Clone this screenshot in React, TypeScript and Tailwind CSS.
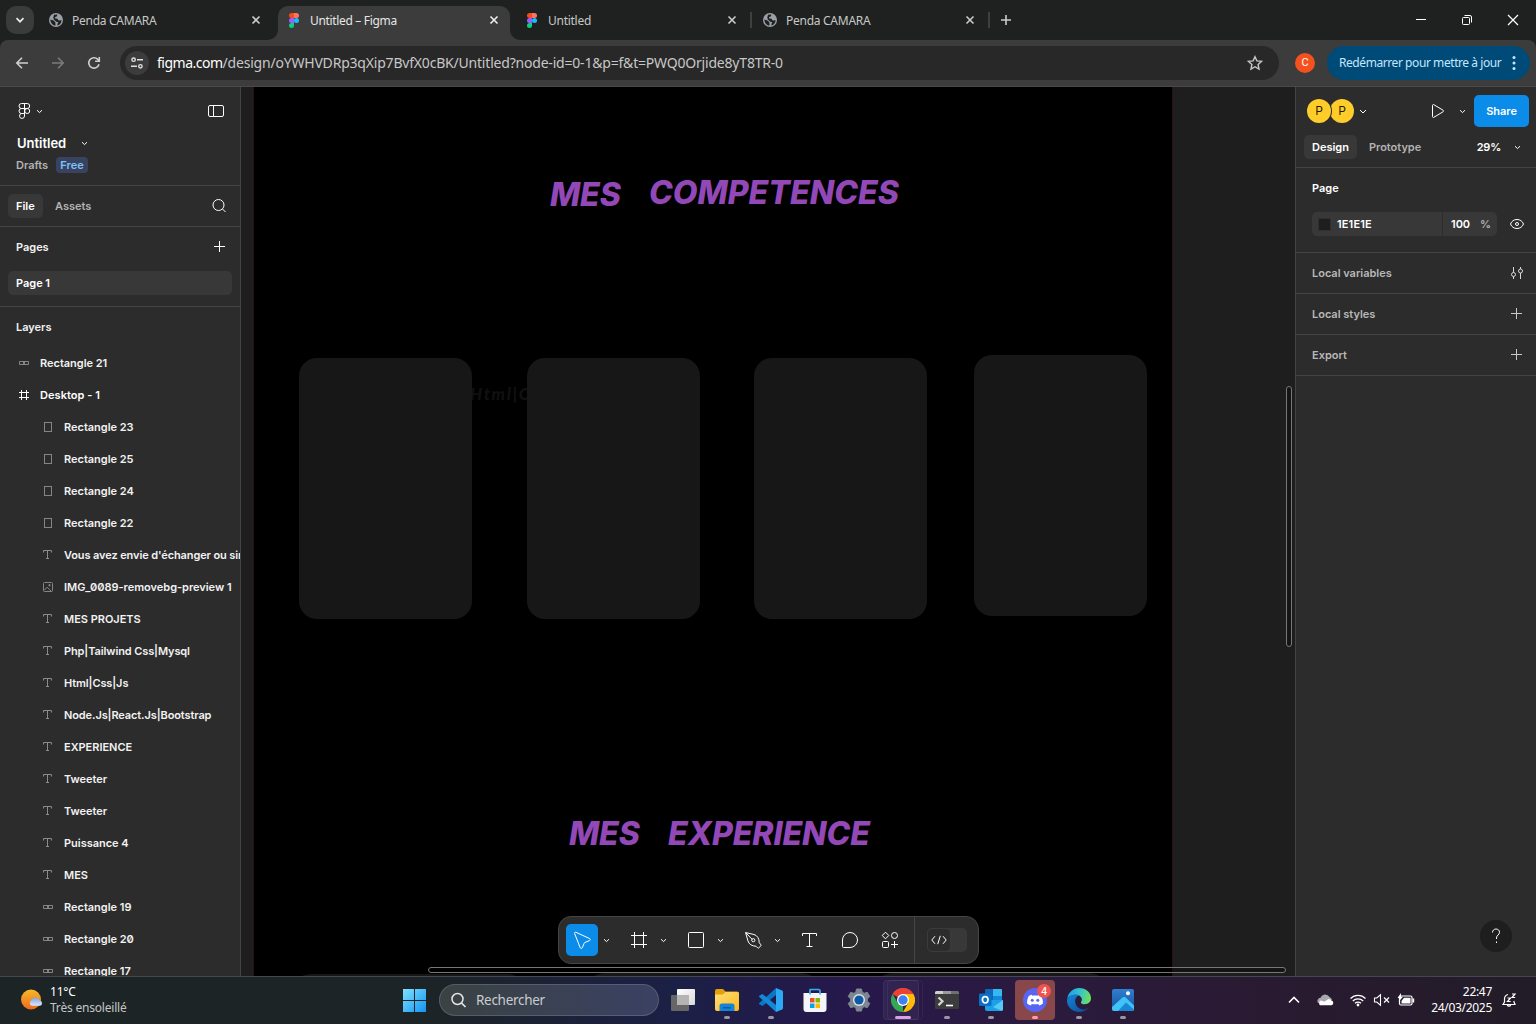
import React from "react";

type Kids = { children?: React.ReactNode; className?: string };

const Svg = ({ w, h = w, children, className = "" }: Kids & { w: number; h?: number }) => (
  <svg width={w} height={h} viewBox={`0 0 ${w} ${h}`} fill="none" className={`shrink-0 ${className}`}>
    {children}
  </svg>
);

const Chevron = ({ className = "" }: { className?: string }) => (
  <Svg w={16} className={`text-white ${className}`}>
    <path d="M6 7.200 8.500 9.600l2.500-2.400" stroke="currentColor" strokeWidth="1" />
  </Svg>
);

/* ---------- Browser chrome ---------- */

const Globe = () => (
  <Svg w={14}>
    <circle cx="7" cy="7" r="7" fill="#9aa0a6" />
    <path
      d="M1.400 6.500 4.500 7.500 6.300 9.300 6.600 12.600C3.600 12.300 1.400 9.800 1.400 6.500ZM5 1.700 8.300 1.500 8 3.200 6.200 4 6 5.500 8.500 5.800 9.500 7.500 12.600 7.200C12.500 10 10.600 12.200 8.300 12.500L8.600 10.400 9.400 9.300 7.300 8.700 4.800 6.600 4.300 4.600Z"
      fill="#1f2120"
    />
  </Svg>
);

const FigmaLogo = () => (
  <Svg w={10} h={15}>
    <path d="M2.500 0H5v5H2.500a2.500 2.500 0 0 1 0-5Z" fill="#f24e1e" />
    <path d="M5 0h2.500a2.500 2.500 0 0 1 0 5H5Z" fill="#ff7262" />
    <path d="M2.500 5H5v5H2.500a2.500 2.500 0 0 1 0-5Z" fill="#a259ff" />
    <circle cx="7.500" cy="7.500" r="2.500" fill="#1abcfe" />
    <path d="M2.500 10H5v2.500A2.500 2.500 0 1 1 2.500 10Z" fill="#0acf83" />
  </Svg>
);

const TabClose = ({ light = false }: { light?: boolean }) => (
  <Svg w={10} className={light ? "text-[#eeeeee]" : "text-[#c9cccb]"}>
    <path d="m1.500 1.500 7 7M8.500 1.500l-7 7" stroke="currentColor" strokeWidth="1.600" />
  </Svg>
);

const tabs = [
  { title: "Penda CAMARA", icon: "globe", active: false, sep: false },
  { title: "Untitled – Figma", icon: "figma", active: true, sep: false },
  { title: "Untitled", icon: "figma", active: false, sep: true },
  { title: "Penda CAMARA", icon: "globe", active: false, sep: true },
];

const TabStrip = () => (
  <div className="flex h-10 bg-[#1f2120]">
    <div className="flex w-10 shrink-0 items-center pl-1.5">
      <div className="flex size-7 items-center justify-center rounded-[10px] bg-[#3a3b3b]">
        <Svg w={10}>
          <path d="m1.500 3.200 3.500 3.500 3.500-3.500" stroke="#e8e8e8" strokeWidth="1.700" />
        </Svg>
      </div>
    </div>
    {tabs.map((t, i) => (
      <div key={i} className="relative flex w-[238px] shrink-0 pt-1.5">
        {t.active && (
          <>
            <Svg w={10} className="absolute -left-2.5 bottom-0">
              <path d="M10 0v10H0A10 10 0 0 0 10 0Z" fill="#3c3c3c" />
            </Svg>
            <Svg w={10} className="absolute right-[-4px] bottom-0">
              <path d="M0 0v10h10A10 10 0 0 1 0 0Z" fill="#3c3c3c" />
            </Svg>
          </>
        )}
        <div
          className={
            t.active
              ? "flex w-[232px] items-center rounded-t-[10px] bg-[#3c3c3c] pb-1.5"
              : "flex w-[232px] items-center pb-1.5"
          }
        >
          <div className="flex w-8 shrink-0 justify-center">{t.icon === "globe" ? <Globe /> : <FigmaLogo />}</div>
          <span
            className={
              t.active
                ? "mt-0.5 w-[179px] font-['Noto_Sans',sans-serif] text-[12px] tracking-[-0.33px] text-[#e6e6e6]"
                : "mt-0.5 w-[179px] font-['Noto_Sans',sans-serif] text-[12px] tracking-[-0.27px] text-[#c6c8c7]"
            }
          >
            {t.title}
          </span>
          <TabClose light={t.active} />
        </div>
        {t.sep && <div className="absolute right-0.5 top-3 h-4 w-0.5 bg-[#3e4040]" />}
      </div>
    ))}
    <div className="flex w-7 items-center justify-center">
      <Svg w={12}>
        <path d="M6 1v10M1 6h10" stroke="#c9cccb" strokeWidth="1.600" />
      </Svg>
    </div>
    <div className="ml-auto flex">
      <div className="flex w-[46px] items-center justify-center">
        <Svg w={10}>
          <path d="M0 4.500h10" stroke="#fff" />
        </Svg>
      </div>
      <div className="flex w-[46px] items-center justify-center">
        <Svg w={12}>
          <rect x="1.500" y="3.500" width="7" height="7" rx="1" stroke="#fff" />
          <path d="M3.500 1.500H9a1.500 1.500 0 0 1 1.500 1.500v5.500" stroke="#fff" />
        </Svg>
      </div>
      <div className="flex w-[46px] items-center justify-center">
        <Svg w={12}>
          <path d="m1 1 10 10M11 1 1 11" stroke="#fff" strokeWidth="1.200" />
        </Svg>
      </div>
    </div>
  </div>
);

const AddressBar = () => (
  <div className="bg-[#1f2120]">
    <div className="flex h-[47px] items-center rounded-t-lg border-b border-[#494949] bg-[#3c3c3c] pr-1.5">
      <div className="flex w-[120px] items-center gap-5 pl-3.5">
        <Svg w={16}>
          <path d="M14 8H3M8 2.800 2.800 8 8 13.200" stroke="#cfcfcf" strokeWidth="1.600" />
        </Svg>
        <Svg w={16}>
          <path d="M2 8h11M8 2.800 13.200 8 8 13.200" stroke="#7b7b7b" strokeWidth="1.600" />
        </Svg>
        <Svg w={16}>
          <path d="M13 9.200A5.200 5.200 0 1 1 11.800 4.400L13 5.600" stroke="#cfcfcf" strokeWidth="1.600" />
          <path d="M13.300 2v4.200H9.100" stroke="#cfcfcf" strokeWidth="1.600" />
        </Svg>
      </div>
      <div className="flex h-[34px] w-[1159px] shrink-0 items-center rounded-full bg-[#282828] pl-[5px] pr-4">
        <div className="flex size-6 items-center justify-center rounded-full bg-[#3c3c3c]">
          <Svg w={14}>
            <circle cx="3.600" cy="3.700" r="1.700" stroke="#e0e0e0" strokeWidth="1.400" />
            <path d="M7 3.700h6M1 10.300h6" stroke="#e0e0e0" strokeWidth="1.500" />
            <circle cx="10.400" cy="10.300" r="1.700" stroke="#e0e0e0" strokeWidth="1.400" />
          </Svg>
        </div>
        <span className="mb-0.5 ml-2 whitespace-nowrap font-['Noto_Sans',sans-serif] text-[14px] tracking-[-0.2px] text-[#c7c7c7]">
          <span className="tracking-[-0.5px] text-white">figma.com</span>/design/oYWHVDRp3qXip7BvfX0cBK/Untitled?node-id=0-1&amp;p=f&amp;t=PWQ0Orjide8yT8TR-0
        </span>
        <Svg w={16} className="ml-auto">
          <path d="m8 1.700 1.900 4.200 4.600.5-3.400 3.100.9 4.500-4-2.300L4 14l.9-4.500L1.500 6.400l4.600-.5Z" stroke="#c7c7c7" strokeWidth="1.400" />
        </Svg>
      </div>
      <div className="ml-4 flex size-5 shrink-0 items-center justify-center rounded-full bg-[#f4511e] font-['Roboto',sans-serif] text-[11px] text-white">
        C
      </div>
      <div className="ml-auto flex h-[34px] w-[203px] shrink-0 items-center rounded-full bg-[#004a77] pl-3 text-[#c2e7ff]">
        <span className="w-[168px] whitespace-nowrap font-['Noto_Sans',sans-serif] text-[12px] tracking-[-0.43px]">
          Redémarrer pour mettre à jour
        </span>
        <Svg w={14} h={16}>
          <circle cx="7" cy="2.500" r="1.500" fill="#c2e7ff" />
          <circle cx="7" cy="8" r="1.500" fill="#c2e7ff" />
          <circle cx="7" cy="13.500" r="1.500" fill="#c2e7ff" />
        </Svg>
      </div>
    </div>
  </div>
);

/* ---------- Left panel ---------- */

const LayerIcon = ({ kind }: { kind: string }) => {
  if (kind === "text")
    return (
      <Svg w={12}>
        <path d="M1.500 3.500v-2h8v2M5.500 1.500v8M4 9.500h3" stroke="#8b8b8b" />
      </Svg>
    );
  if (kind === "rect")
    return (
      <Svg w={12}>
        <rect x="2.500" y="1.500" width="7" height="9" stroke="#858585" />
      </Svg>
    );
  if (kind === "flat")
    return (
      <Svg w={12}>
        <path d="M1.500 4.500h9v3h-9Z" stroke="#858585" />
        <path d="M5 4h2v4H5Z" fill="#858585" />
      </Svg>
    );
  if (kind === "image")
    return (
      <Svg w={12}>
        <rect x="1.500" y="1.500" width="9" height="9" rx="1" stroke="#858585" />
        <path d="m2 9.500 3-3.300 4.500 4.300" stroke="#858585" />
        <path d="M7.500 3v2.400M6.300 4.200h2.400" stroke="#858585" />
      </Svg>
    );
  return (
    <Svg w={12}>
      <path d="M3.500 1v10M8.500 1v10M1 3.500h10M1 8.500h10" stroke="#fff" />
    </Svg>
  );
};

const layers: [string, string][] = [
  ["rect", "Rectangle 23"],
  ["rect", "Rectangle 25"],
  ["rect", "Rectangle 24"],
  ["rect", "Rectangle 22"],
  ["text", "Vous avez envie d'échanger ou simplement"],
  ["image", "IMG_0089-removebg-preview 1"],
  ["text", "MES PROJETS"],
  ["text", "Php|Tailwind Css|Mysql"],
  ["text", "Html|Css|Js"],
  ["text", "Node.Js|React.Js|Bootstrap"],
  ["text", "EXPERIENCE"],
  ["text", "Tweeter"],
  ["text", "Tweeter"],
  ["text", "Puissance 4"],
  ["text", "MES"],
  ["flat", "Rectangle 19"],
  ["flat", "Rectangle 20"],
  ["flat", "Rectangle 17"],
];

const LeftPanel = () => (
  <aside className="flex w-[241px] shrink-0 flex-col overflow-hidden border-r border-[#444444] bg-[#2c2c2c]">
    <div className="h-[99px] shrink-0 border-b border-[#444444]">
      <div className="flex h-12 items-center pl-4">
        <Svg w={16}>
          <path
            d="M8.500.500H5.500a2.500 2.500 0 0 0 0 5h3ZM8.500.500h2.700a2.500 2.500 0 0 1 0 5H8.500ZM8.500 5.500h-3a2.500 2.500 0 0 0 0 5h3ZM8.500 10.500h-3a2.500 2.500 0 1 0 3 2.500Z"
            stroke="#fff"
          />
          <circle cx="11.200" cy="8" r="2.500" stroke="#fff" />
        </Svg>
        <Chevron className="-ml-px" />
        <Svg w={16} className="ml-auto mr-4">
          <rect x=".5" y="2.500" width="15" height="11" rx="1.500" stroke="#fff" />
          <path d="M5.500 2.500v11" stroke="#fff" />
        </Svg>
      </div>
      <div className="mt-px flex h-4 items-center pl-[17px] text-[13px] font-semibold">
        <span className="w-[59px] text-white">Untitled</span>
        <Chevron className="-mt-0.5" />
      </div>
      <div className="mt-[5px] flex h-4 items-center pl-4">
        <span className="w-10 text-[#b3b3b3]">Drafts</span>
        <span className="flex h-4 w-8 items-center justify-center rounded bg-[#394360] text-[#7cc4f8]">Free</span>
      </div>
    </div>
    <div className="flex h-[41px] shrink-0 items-center border-b border-[#444444] pl-2">
      <span className="flex h-6 w-[35px] items-center rounded-[5px] bg-[#383838] pl-2 font-semibold text-white">File</span>
      <span className="ml-3 text-[#b3b3b3]">Assets</span>
      <Svg w={16} className="ml-auto mr-[13px]">
        <circle cx="7.500" cy="7" r="5.500" stroke="#fff" />
        <path d="m11.500 11 3 3" stroke="#fff" />
      </Svg>
    </div>
    <div className="h-20 shrink-0 border-b border-[#444444]">
      <div className="flex h-10 items-center pl-4 font-semibold text-[#f2f2f2]">
        Pages
        <Svg w={16} className="ml-auto mr-[13px]">
          <path d="M8.500 2v11M3 7.500h11" stroke="#fff" />
        </Svg>
      </div>
      <div className="mx-2 mt-1 flex h-6 items-center rounded-[5px] bg-[#383838] pl-2 font-semibold text-white">Page 1</div>
    </div>
    <div className="flex h-10 shrink-0 items-center pl-4 font-semibold text-[#f2f2f2]">Layers</div>
    <div className="flex h-8 shrink-0 items-center pl-[18px] text-[#f2f2f2]">
      <LayerIcon kind="flat" />
      <span className="ml-2.5">Rectangle 21</span>
    </div>
    <div className="flex h-8 shrink-0 items-center pl-[18px] font-semibold tracking-[0.05px] text-white">
      <LayerIcon kind="frame" />
      <span className="ml-2.5">Desktop - 1</span>
    </div>
    {layers.map(([kind, name], i) => (
      <div key={i} className="flex h-8 shrink-0 items-center whitespace-nowrap pl-[42px] text-[#f2f2f2]">
        <LayerIcon kind={kind} />
        <span
          className={
            name.includes("|") || name.startsWith("Vous")
              ? "ml-2.5 tracking-[-0.11px] slashed-zero"
              : "ml-2.5 slashed-zero"
          }
        >
          {name}
        </span>
      </div>
    ))}
  </aside>
);

/* ---------- Canvas ---------- */

const Tool = ({ children, chevron = false, className = "" }: Kids & { chevron?: boolean }) => (
  <div className={`flex h-8 items-center ${className}`}>
    <div className="flex size-8 items-center justify-center">{children}</div>
    {chevron && <Chevron />}
  </div>
);

const Toolbar = () => (
  <div className="absolute left-[317px] top-[829px] flex h-12 w-[421px] items-center rounded-[13px] border border-[#454545] bg-[#2c2c2c] pl-[7px]">
    <div className="flex h-8 items-center">
      <div className="flex size-8 items-center justify-center rounded-[5px] bg-[#0c8ce9]">
        <Svg w={24}>
          <path
            d="M4.600 5.500 10.200 19.700c.4 1 1.700 1 2.100 0l1.900-4.600c.1-.3.300-.5.600-.6l4.700-1.900c1-.4.900-1.800 0-2.100L6 4.300c-1-.3-1.800.4-1.400 1.200Z"
            stroke="#fff"
          />
        </Svg>
      </div>
      <Chevron />
    </div>
    <Tool chevron className="ml-[9px]">
      <Svg w={16}>
        <path d="M3.500 0v16M12.500 0v16M0 3.500h16M0 12.500h16" stroke="#fff" />
      </Svg>
    </Tool>
    <Tool chevron className="ml-[9px]">
      <Svg w={16}>
        <rect x=".5" y=".5" width="15" height="15" rx="1" stroke="#fff" />
      </Svg>
    </Tool>
    <Tool chevron className="ml-[9px]">
      <Svg w={18}>
        <path
          d="M1.500 1.500 10 3.500c3.200.9 5.300 4 5.200 8.100l1.700 2.200c.3.300.3.700 0 1l-2.200 2.100c-.3.300-.7.300-1 0L12 15.200C8 15.200 5 13.300 4 10L1.500 1.500ZM2 2 8.200 8.400"
          stroke="#fff"
        />
        <circle cx="9.300" cy="9.200" r="1.600" stroke="#fff" />
      </Svg>
    </Tool>
    <Tool className="ml-2">
      <Svg w={16}>
        <path d="M1.500 4v-2.500h14V4M8.500 1.500v13M5.500 14.500h6" stroke="#fff" />
      </Svg>
    </Tool>
    <Tool className="ml-[9px]">
      <Svg w={16}>
        <path d="M.5 8A7.500 7.500 0 1 1 8 15.500H1.500a1 1 0 0 1-1-1Z" stroke="#fff" />
      </Svg>
    </Tool>
    <Tool className="ml-2">
      <Svg w={18}>
        <path d="m4.500 1.200 3.300 3.300-3.300 3.300-3.300-3.300Z" stroke="#fff" strokeLinejoin="round" />
        <circle cx="13.500" cy="4.500" r="3" stroke="#fff" />
        <rect x="1.500" y="10.500" width="6" height="6" rx="1" stroke="#fff" />
        <path d="M13.500 10v7M10 13.500h7" stroke="#fff" />
      </Svg>
    </Tool>
    <div className="ml-2 h-full w-px bg-[#454545]" />
    <div className="ml-3 flex h-6 w-10 rounded-[5px] bg-[#383838]">
      <div className="flex size-6 items-center justify-center rounded-[5px] border border-[#3b3b3b] bg-[#2c2c2c]">
        <Svg w={16} h={10}>
          <path d="M4 1.200.8 5 4 8.800M12 1.200 15.200 5 12 8.800M9.300.8 6.700 9.200" stroke="#fff" />
        </Svg>
      </div>
    </div>
  </div>
);

const Canvas = () => (
  <main className="relative w-[1054px] shrink-0 overflow-hidden bg-[#1e1e1e]">
    <div className="absolute left-3 top-0 h-full w-[920px] border-x border-[#2b1212] bg-black" />
    <div className="absolute left-[229px] top-[294px] font-['Lato',sans-serif] text-[17px] font-black italic tracking-[1.6px] text-[#101010]">
      Html|C
    </div>
    <div className="absolute left-[58px] top-[270.5px] h-[261px] w-[173px] rounded-[18px] bg-[#171717]" />
    <div className="absolute left-[286px] top-[270.5px] h-[261px] w-[173px] rounded-[18px] bg-[#171717]" />
    <div className="absolute left-[513px] top-[270.5px] h-[261px] w-[173px] rounded-[18px] bg-[#171717]" />
    <div className="absolute left-[733px] top-[268px] h-[261px] w-[172.5px] rounded-[18px] bg-[#171717]" />
    <div className="absolute left-[50px] top-[887px] h-20 w-[236px] rounded-[20px] bg-[#171717]" />
    <div className="absolute left-[344px] top-[886px] h-20 w-[236px] rounded-[20px] bg-[#171717]" />
    <div className="absolute left-[632px] top-[886px] h-20 w-[236px] rounded-[20px] bg-[#171717]" />

    <h2 className="absolute left-[309px] top-[88px] text-[32px] font-extrabold italic leading-10 tracking-[-0.1px] text-[#9248b6]">MES</h2>
    <h2 className="absolute left-[408px] top-[86px] text-[32px] font-extrabold italic leading-10 tracking-normal text-[#9248b6]">COMPETENCES</h2>
    <h2 className="absolute left-[328px] top-[727px] text-[32px] font-extrabold italic leading-10 tracking-[-0.1px] text-[#9248b6]">MES</h2>
    <h2 className="absolute left-[427px] top-[727px] text-[32px] font-extrabold italic leading-10 tracking-[-0.1px] text-[#9248b6]">EXPERIENCE</h2>

    <div className="absolute left-[187px] top-[880px] h-1.5 w-[858px] rounded-full border border-[#777777] bg-black/30" />
    <div className="absolute left-[1045px] top-[299px] h-[261px] w-1.5 rounded-full border border-[#777777] bg-black/30" />
    <Toolbar />
  </main>
);

/* ---------- Right panel ---------- */

const PanelRow = ({ label, children }: { label: string; children: React.ReactNode }) => (
  <div className="flex h-[41px] items-center justify-between border-b border-[#444444] pl-4 pr-3 text-[#b8b8b8]">
    {label}
    {children}
  </div>
);

const Plus = () => (
  <Svg w={16}>
    <path d="M8.500 2v11M3 7.500h11" stroke="#c8c8c8" />
  </Svg>
);

const RightPanel = () => (
  <aside className="relative w-[241px] shrink-0 border-l border-[#444444] bg-[#2c2c2c]">
    <div className="h-[81px] border-b border-[#444444]">
      <div className="flex h-12 items-center pl-[11px] pr-[7px]">
        <div className="z-10 flex size-6 items-center justify-center rounded-full bg-[#ffcd29] text-[12px] font-normal text-black/90 ring-1 ring-[#2c2c2c]">
          P
        </div>
        <div className="-ml-px flex size-6 items-center justify-center rounded-full bg-[#ffcd29] text-[12px] font-normal text-black/90">
          P
        </div>
        <Svg w={16}>
          <path d="m6 7 3 3 3-3" stroke="#fff" />
        </Svg>
        <Svg w={16} className="ml-auto">
          <path d="M2.500 2.300v11.400c0 .6.600 1 1.200.7l9.500-5.700c.5-.3.500-1 0-1.400l-9.500-5.700c-.6-.3-1.200.1-1.200.7Z" stroke="#fff" />
        </Svg>
        <Chevron className="ml-2" />
        <div className="ml-1 flex h-8 w-[55px] items-center justify-center rounded-[5px] bg-[#0c8ce9] font-semibold text-white">Share</div>
      </div>
      <div className="flex h-6 items-center pl-2">
        <span className="flex h-6 w-[53px] items-center justify-center rounded-[5px] bg-[#383838] font-semibold text-white">Design</span>
        <span className="ml-3 text-[#b3b3b3]">Prototype</span>
        <span className="ml-auto mr-2 tracking-[-0.2px] text-white">29%</span>
        <Chevron className="mr-[11px]" />
      </div>
    </div>
    <div className="h-[85px] border-b border-[#444444]">
      <div className="flex h-10 items-center pl-4 font-semibold text-white">Page</div>
      <div className="mt-1 flex h-6 items-center pl-4 text-white">
        <div className="flex h-6 w-[130px] items-center rounded-l-[5px] bg-[#383838] pl-1.5 tracking-[0.15px]">
          <div className="mr-1.5 size-[13px] border border-[#303030] bg-[#1e1e1e]" />
          1E1E1E
        </div>
        <div className="ml-px flex h-6 w-[54px] items-center rounded-r-[5px] bg-[#383838] pl-2">
          <span className="w-[29px]">100</span>
          <span className="text-[#b3b3b3]">%</span>
        </div>
        <Svg w={16} className="ml-3">
          <path d="M8 3.500c3 0 5.400 1.600 6.500 4.500-1.100 2.900-3.500 4.500-6.500 4.500S2.600 10.900 1.500 8C2.600 5.100 5 3.500 8 3.500Z" stroke="#fff" />
          <circle cx="8" cy="8" r="1.500" stroke="#fff" />
        </Svg>
      </div>
    </div>
    <PanelRow label="Local variables">
      <Svg w={16}>
        <path d="M5.500 2v5.500M5.500 11.500V14M12.500 8v6M12.500 2v2" stroke="#d8d8d8" />
        <circle cx="5.500" cy="9.500" r="2" stroke="#d8d8d8" />
        <circle cx="12.500" cy="6" r="2" stroke="#d8d8d8" />
      </Svg>
    </PanelRow>
    <PanelRow label="Local styles">
      <Plus />
    </PanelRow>
    <PanelRow label="Export">
      <Plus />
    </PanelRow>
    <div className="absolute bottom-6 right-6 flex size-8 items-center justify-center rounded-full bg-[#1e1e1e]">
      <Svg w={16}>
        <path d="M4.500 4.500C4.500 2.500 6 1 8 1s3.500 1.300 3.500 3.300c0 2.700-3 2.700-3 5.700v1" stroke="#fff" />
        <path d="M8.500 13.500V15" stroke="#fff" />
      </Svg>
    </div>
  </aside>
);

/* ---------- Taskbar ---------- */

const App24 = ({ children, dot, className = "" }: Kids & { dot?: string }) => (
  <div className={`relative mt-[3px] flex h-10 w-11 shrink-0 items-center justify-center self-start ${className}`}>
    {children}
    {dot && <div className={`absolute bottom-[1px] h-[3px] rounded-full ${dot}`} />}
  </div>
);

const GREY = "w-1.5 bg-[#9a94a5]";

const Taskbar = () => (
  <footer className="flex h-12 shrink-0 items-center border-t border-[#464650] bg-[linear-gradient(90deg,#1d2425_0%,#1c2427_28%,#1b2046_44%,#26184c_55%,#2a1a40_65%,#2a1a33_80%,#221c27_100%)] font-['Noto_Sans',sans-serif]">
    <div className="flex w-[392px] items-center pb-0.5 pl-5">
      <Svg w={24} className="-mt-0.5">
        <defs>
          <linearGradient id="sun" x1="0" y1="0" x2="0" y2="1">
            <stop stopColor="#f6b92c" />
            <stop offset="1" stopColor="#ee6a1c" />
          </linearGradient>
          <linearGradient id="cloud" x1="0" y1="0" x2="0" y2="1">
            <stop stopColor="#7ea6e6" />
            <stop offset="1" stopColor="#dbe8fb" />
          </linearGradient>
        </defs>
        <circle cx="11" cy="12.500" r="10" fill="url(#sun)" />
        <path d="M12 18.800a3 3 0 0 1 0-5.800 4 4 0 0 1 7.400.2 2.900 2.900 0 0 1 .8 5.600Z" fill="url(#cloud)" />
      </Svg>
      <div className="ml-1.5 text-[12px] leading-4 tracking-[-0.2px]">
        <div className="text-white">11°C</div>
        <div className="text-[#c3c6c6]">Très ensoleillé</div>
      </div>
    </div>
    <App24>
      <Svg w={24}>
        <defs>
          <linearGradient id="win" x1="0" y1="0" x2="1" y2="1">
            <stop stopColor="#7fe0ff" />
            <stop offset="1" stopColor="#1295f0" />
          </linearGradient>
        </defs>
        <path d="M1 1h11v11H1ZM13 1h11v11H13ZM1 13h11v11H1ZM13 13h11v11H13Z" fill="url(#win)" />
      </Svg>
    </App24>
    <div className="ml-[3px] mr-[2px] mt-[7px] flex h-8 w-[220px] shrink-0 items-center self-start rounded-full border border-white/15 bg-[linear-gradient(90deg,#3a4243,#3a4163)] pl-2.5 text-[13.5px] text-[#c9ccd0]">
      <Svg w={18}>
        <circle cx="7.500" cy="8" r="5.500" stroke="#e6e6e6" strokeWidth="1.500" />
        <path d="m11.500 12 4 4" stroke="#e6e6e6" strokeWidth="1.700" />
      </Svg>
      <span className="ml-2 tracking-[-0.3px]">Rechercher</span>
    </div>
    <App24>
      <Svg w={24} h={22}>
        <defs>
          <linearGradient id="tv" x1="0" y1="0" x2="1" y2="1">
            <stop stopColor="#fff" />
            <stop offset="1" stopColor="#d8d8d8" />
          </linearGradient>
        </defs>
        <rect x="6" width="18" height="16" rx="1" fill="url(#tv)" />
        <rect y="6" width="18" height="16" rx="1" fill="#666" />
        <rect x="6" y="6" width="12" height="10" fill="#b4b4b4" />
      </Svg>
    </App24>
    <App24 dot={GREY}>
      <Svg w={24}>
        <defs>
          <linearGradient id="fold" x1="0" y1="0" x2="1" y2="1">
            <stop stopColor="#ffe07a" />
            <stop offset="1" stopColor="#fbb81c" />
          </linearGradient>
        </defs>
        <path d="M0 3a2 2 0 0 1 2-2h6l2.500 2.500H22A2 2 0 0 1 24 5v5H0Z" fill="#e3a008" />
        <path d="M0 6.500h8l2.500-2.500H22.500A1.500 1.500 0 0 1 24 5.500V21a2 2 0 0 1-2 2H2a2 2 0 0 1-2-2Z" fill="url(#fold)" />
        <path d="M4.500 23v-5a2.500 2.500 0 0 1 2.500-2.500h10a2.500 2.500 0 0 1 2.500 2.500v5Z" fill="#1583d8" />
        <path d="M8 19h8v1.500H8Z" fill="#0b5cab" />
      </Svg>
    </App24>
    <App24 dot={GREY}>
      <Svg w={24}>
        <path d="M17 0v7L3.500 18 .3 16.300c-.4-.3-.4-.9 0-1.200Z" fill="#0b76c4" />
        <path d="M17 24v-7L3.500 6 .3 7.700c-.4.300-.4.900 0 1.200Z" fill="#1488d8" />
        <path d="m17 0 6 2.500c.6.300 1 .8 1 1.500v16c0 .7-.4 1.200-1 1.500L17 24Z" fill="#2ca9f4" />
      </Svg>
    </App24>
    <App24>
      <Svg w={24}>
        <path d="M7 6V2.500C7 1.500 7.500 1.500 8.500 1.500h7c1 0 1.500 0 1.500 1V6" stroke="#31b0f0" strokeWidth="1.700" />
        <path d="M.5 5h23v16a3 3 0 0 1-3 3h-17a3 3 0 0 1-3-3Z" fill="#f4f5f8" />
        <path d="M6.200 5h1.700v1.500H6.200ZM16.200 5h1.700v1.500h-1.700Z" fill="#31b0f0" />
        <path d="M7 10h4.500v4.500H7Z" fill="#f25022" />
        <path d="M12.500 10H17v4.500h-4.500Z" fill="#7fba00" />
        <path d="M7 15.500h4.500V20H7Z" fill="#00a4ef" />
        <path d="M12.500 15.500H17V20h-4.500Z" fill="#ffb900" />
      </Svg>
    </App24>
    <App24>
      <Svg w={24}>
        <path
          d="M9.500 1h5l.7 3.200 2 1.100 3.100-1 2.500 4.300-2.400 2.200v2.400l2.400 2.200-2.500 4.300-3.100-1-2 1.100-.7 3.200h-5l-.7-3.200-2-1.100-3.100 1-2.500-4.300 2.400-2.200v-2.400L1.200 8.600l2.500-4.300 3.100 1 2-1.100Z"
          fill="#7d8791"
          stroke="#7d8791"
          strokeLinejoin="round"
        />
        <circle cx="12" cy="12" r="6" fill="#dfe5ea" />
        <circle cx="12" cy="12" r="4.600" fill="#0c59a4" />
      </Svg>
    </App24>
    <App24 dot="w-4 bg-[#dba0e6]">
      <div className="absolute left-1.5 h-10 w-[36px] rounded border border-white/5" />
      <div className="absolute left-0.5 h-10 w-[36px] rounded border border-white/5 bg-white/5" />
      <Svg w={24} className="relative">
        <path d="M12 12 1.600 6A12 12 0 0 1 22.400 6Z" fill="#ea4335" />
        <path d="M12 0A12 12 0 0 1 22.400 6H12L6.800 9 1.600 6A12 12 0 0 1 12 0Z" fill="#ea4335" />
        <path d="M1.600 6 6.800 15 12 18v6A12 12 0 0 1 1.600 6Z" fill="#34a853" />
        <path d="M22.400 6A12 12 0 0 1 12 24l5.200-9L12 6Z" fill="#fbbc05" />
        <circle cx="12" cy="12" r="6" fill="#fff" />
        <circle cx="12" cy="12" r="4.700" fill="#3f82ee" />
      </Svg>
    </App24>
    <App24 dot={GREY}>
      <Svg w={24} h={18}>
        <rect width="24" height="18" rx="1.500" fill="#3c3c3c" />
        <path d="M0 1.500A1.500 1.500 0 0 1 1.500 0H8v3H0Z" fill="#cfcfcf" />
        <path d="M8 0h8v3H8Z" fill="#9a9a9a" />
        <path d="M16 0h6.500A1.500 1.500 0 0 1 24 1.500V3h-8Z" fill="#707070" />
        <path d="m3.500 6.500 4 3.800-4 3.800" stroke="#d5d5d5" strokeWidth="2.200" />
        <path d="M11 14.500h7" stroke="#fff" strokeWidth="1.600" />
      </Svg>
    </App24>
    <App24 dot={GREY}>
      <Svg w={24} h={22}>
        <rect x="6" width="17" height="13" rx="1" fill="#1066b5" />
        <path d="M14 0h8a1 1 0 0 1 1 1v6h-9Z" fill="#35b8f1" />
        <path d="M14 7h9v6h-9Z" fill="#1488d9" />
        <path d="M6 11h18v9a2 2 0 0 1-2 2H8a2 2 0 0 1-2-2Z" fill="#1aa0e8" />
        <path d="m24 11-10 7 9 4 1-1.500Z" fill="#56c9f7" />
        <rect y="4.500" width="12.500" height="12.500" rx="1.200" fill="#0a6fc6" />
        <ellipse cx="6.200" cy="10.800" rx="2.800" ry="3.200" stroke="#fff" strokeWidth="1.700" />
      </Svg>
    </App24>
    <App24 dot="w-1.5 bg-[#ff9ba4]">
      <div className="absolute left-0.5 h-10 w-10 rounded bg-[#88474b]" />
      <Svg w={24} className="relative">
        <circle cx="12" cy="12" r="12" fill="#5865f2" />
        <path
          d="M8.800 6.800c-1.200.2-2.200.6-3 1.100-1.300 2.300-1.900 4.800-1.700 7.700 1.100.9 2.400 1.500 3.800 1.800l.9-1.500c2.100.5 4.300.5 6.400 0l.9 1.500c1.400-.3 2.700-.9 3.800-1.800.2-2.900-.4-5.400-1.700-7.700-.8-.5-1.800-.9-3-1.100l-.5 1c-1.800-.3-3.600-.3-5.400 0Z"
          fill="#fff"
        />
        <circle cx="9.200" cy="12.300" r="1.500" fill="#5865f2" />
        <circle cx="14.800" cy="12.300" r="1.500" fill="#5865f2" />
      </Svg>
      <div className="absolute right-[6px] top-[4px] flex size-3.5 items-center justify-center rounded-full bg-[#ef5350] font-['Open_Sans',sans-serif] text-[10px] font-semibold text-white">
        4
      </div>
    </App24>
    <App24 dot={GREY}>
      <Svg w={24}>
        <defs>
          <linearGradient id="edgeTop" x1="0" y1=".3" x2="1" y2=".5">
            <stop stopColor="#1b9ee2" />
            <stop offset=".5" stopColor="#35c1d0" />
            <stop offset="1" stopColor="#6fe05a" />
          </linearGradient>
          <linearGradient id="edgeLow" x1="0" y1="0" x2="1" y2="1">
            <stop stopColor="#1784d8" />
            <stop offset="1" stopColor="#0c4a94" />
          </linearGradient>
        </defs>
        <path d="M.2 10.500C1.300 4.200 6.200 0 12.200 0 19 0 24 4.800 24 10.300c0 3.500-2.800 5.900-6.200 5.900-2.500 0-3.900-.8-3.900-1.800 0-.7 1-1.100 1-2.800 0-2.600-2.600-4.900-6.300-4.900C5 6.700 1.700 8.500.2 10.500Z" fill="url(#edgeTop)" />
        <path d="M0 12C.8 8.300 4.500 6.500 8.500 6.700c1.500 0 2.500.3 3.500.8-3.200 1.200-4 4-3.800 6.500.4 4.500 4.600 7.800 8.800 7.600 2 0 3.800-1 5.300-2.500C20.200 22 16.500 24 12.300 24 5 24-.3 18.500 0 12Z" fill="url(#edgeLow)" />
      </Svg>
    </App24>
    <App24 dot={GREY}>
      <Svg w={22}>
        <defs>
          <linearGradient id="ph" x1="0" y1="0" x2="0" y2="1">
            <stop stopColor="#2f7fd0" />
            <stop offset="1" stopColor="#1b4f9e" />
          </linearGradient>
        </defs>
        <rect width="22" height="22" rx="2" fill="url(#ph)" />
        <path d="M0 18 10.500 8.500c1-1 2.200-1 3.200 0L22 16.500V20a2 2 0 0 1-2 2H2a2 2 0 0 1-2-2Z" fill="#3fc4f5" />
        <path d="M6 22 14 13.500l8 7V20a2 2 0 0 1-2 2Z" fill="#1a86d8" />
        <circle cx="16" cy="4.300" r="2" fill="#fff" />
      </Svg>
    </App24>
    <div className="ml-auto flex items-center pb-0.5 pr-[19px]">
      <Svg w={12}>
        <path d="m1 8.500 5-5 5 5" stroke="#fff" strokeWidth="1.600" />
      </Svg>
      <Svg w={18} h={12} className="ml-[17px]">
        <path d="M1 9a3.400 3.400 0 0 1 2.500-5.300A5 5 0 0 1 12.500 3 4 4 0 0 1 15 6Z" fill="#aaa6b0" />
        <path d="M3 11.300a3 3 0 0 1 .5-4.800L7.500 7.500 11.500 5a3.500 3.500 0 0 1 3 1.500 2.500 2.500 0 0 1 0 4.800Z" fill="#fff" />
      </Svg>
      <Svg w={18} h={14} className="ml-[14px]">
        <path d="M1.500 5.500a10.500 10.500 0 0 1 15 0M3.800 8a7.400 7.400 0 0 1 10.400 0M6 10.300a4.200 4.200 0 0 1 6 0" stroke="#fff" strokeWidth="1.300" />
        <circle cx="9" cy="12" r="1.400" fill="#fff" />
      </Svg>
      <Svg w={18} h={14} className="ml-[6px]">
        <path d="M1.500 5h2.300L7.500 1.800v10.400L3.800 9H1.500Z" stroke="#fff" strokeWidth="1.100" />
        <path d="m11 4.500 5 5M16 4.500l-5 5" stroke="#fff" strokeWidth="1.200" />
      </Svg>
      <Svg w={18} h={14} className="ml-[6px]">
        <rect x="2.500" y="3" width="12.500" height="9" rx="1.500" stroke="#fff" strokeWidth="1.200" />
        <path d="M7 4.800H13.500v5.600H4.500V8Z" fill="#fff" />
        <path d="M15.500 5.500h1.700v4h-1.700Z" fill="#fff" />
        <path d="M4 0 .5 5h2L1.800 8.500 6 3.800H4Z" fill="#fff" />
      </Svg>
      <div className="ml-[11px] w-[66px] whitespace-nowrap text-right text-[12px] leading-4 tracking-[-0.3px] text-white">
        <div>22:47</div>
        <div>24/03/2025</div>
      </div>
      <Svg w={16} className="ml-[9px]">
        <path d="M7 2.500A4.700 4.700 0 0 0 3.500 7v3L2 12.500h12L12.700 9M6.300 13a1.800 1.800 0 0 0 3.400 0" stroke="#fff" strokeWidth="1.200" />
        <path d="M6.500 6h3l-3 3.500h3.200M11 2h3l-3 3.500h3.200" stroke="#fff" strokeWidth="1.200" />
      </Svg>
    </div>
  </footer>
);

export default function App() {
  return (
    <div className="flex h-[1024px] w-[1536px] flex-col overflow-hidden bg-black">
      <TabStrip />
      <AddressBar />
      <div className="flex h-[889px] shrink-0 font-['Inter',sans-serif] text-[11px] font-[560] tracking-[-0.02px]">
        <LeftPanel />
        <Canvas />
        <RightPanel />
      </div>
      <Taskbar />
    </div>
  );
}
